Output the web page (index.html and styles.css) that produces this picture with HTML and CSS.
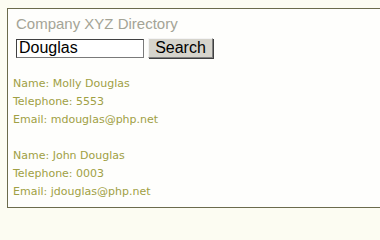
FILE: index.html
```html
<!DOCTYPE html>
<html>
<head>
<meta charset="utf-8">
<link rel="stylesheet" href="styles.css">
</head>
<body>
<div class="box">
  <h1 class="title">Company XYZ Directory</h1>
  <form class="search">
    <input class="field" type="text" value="Douglas">
    <button class="btn" type="button">Search</button>
  </form>
  <div class="entry">
    <div class="line">Name: Molly Douglas</div>
    <div class="line">Telephone: 5553</div>
    <div class="line">Email: mdouglas@php.net</div>
  </div>
  <div class="entry">
    <div class="line">Name: John Douglas</div>
    <div class="line">Telephone: 0003</div>
    <div class="line">Email: jdouglas@php.net</div>
  </div>
</div>
</body>
</html>
```
FILE: styles.css
```css
html, body {
  margin: 0;
  padding: 0;
  background: #fcfcf2;
  overflow: hidden;
}
.box {
  margin: 8px 0 0 7px;
  height: 198px;
  box-sizing: content-box;
  border: 1px solid #6b6b4c;
  border-right: none;
  background: #fefefc;
  padding: 0 0 0 5px;
}
.title {
  margin: 0;
  padding: 6px 0 0 3px;
  font-family: "Liberation Sans", Arial, sans-serif;
  font-weight: normal;
  font-size: 15px;
  line-height: 18px;
  color: #a4a496;
}
.search {
  display: flex;
  align-items: center;
  gap: 4px;
  margin: 5px 0 0 3px;
}
.field {
  width: 128px;
  height: 19px;
  box-sizing: border-box;
  margin: 0;
  padding: 0 2px;
  font-family: "Liberation Sans", Arial, sans-serif;
  font-size: 16px;
  color: #000;
  border: 1px solid #7a7a7a;
  border-top-color: #404040;
  border-left-color: #404040;
  background: #fff;
}
.btn {
  width: 65px;
  height: 20px;
  margin: 0;
  padding: 0;
  font-family: "Liberation Sans", Arial, sans-serif;
  font-size: 16px;
  color: #000;
  background: #d6d4cc;
  border: 1px solid #808080;
  border-top-color: #f4f4f4;
  border-left-color: #f4f4f4;
  box-shadow: 1px 1px 0 #404040;
}
.entry {
  margin-top: 17px;
  font-family: "DejaVu Sans", Verdana, sans-serif;
  font-size: 11px;
  line-height: 18px;
  color: #a0a044;
}
.entry + .entry {
  margin-top: 18px;
}
```
